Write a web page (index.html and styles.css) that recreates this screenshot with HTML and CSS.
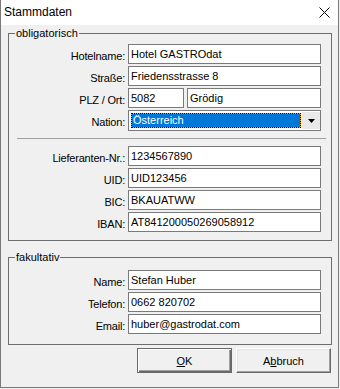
FILE: index.html
```html
<!DOCTYPE html>
<html lang="de">
<head>
    <meta charset="UTF-8">
    <title>Stammdaten</title>
    <link rel="stylesheet" href="styles.css">
</head>
<body>

<div class="window">
    <div class="titlebar">
        <span class="title">Stammdaten</span>
        <svg class="close" width="11" height="11" viewBox="0 0 11 11">
            <path d="M0.5 0.5L10.5 10.5M10.5 0.5L0.5 10.5" stroke="#000" stroke-width="1"/>
        </svg>
    </div>

    <fieldset class="group group-main">
        <legend>obligatorisch</legend>
        <div class="rows">
            <div class="row">
                <label class="lbl">Hotelname:</label>
                <input class="field" type="text" value="Hotel GASTROdat">
            </div>
            <div class="row">
                <label class="lbl">Straße:</label>
                <input class="field" type="text" value="Friedensstrasse 8">
            </div>
            <div class="row">
                <label class="lbl">PLZ / Ort:</label>
                <div class="pair">
                    <input class="field plz" type="text" value="5082">
                    <input class="field ort" type="text" value="Grödig">
                </div>
            </div>
            <div class="row">
                <label class="lbl">Nation:</label>
                <div class="combo">
                    <span class="combo-value">Österreich</span>
                    <span class="combo-btn">
                        <svg width="7" height="4" viewBox="0 0 7 4"><path d="M0 0H7L3.5 4Z" fill="#000"/></svg>
                    </span>
                </div>
            </div>
        </div>

        <div class="sep"></div>

        <div class="rows">
            <div class="row">
                <label class="lbl">Lieferanten-Nr.:</label>
                <input class="field" type="text" value="1234567890">
            </div>
            <div class="row">
                <label class="lbl">UID:</label>
                <input class="field" type="text" value="UID123456">
            </div>
            <div class="row">
                <label class="lbl">BIC:</label>
                <input class="field" type="text" value="BKAUATWW">
            </div>
            <div class="row">
                <label class="lbl">IBAN:</label>
                <input class="field" type="text" value="AT841200050269058912">
            </div>
        </div>
    </fieldset>

    <fieldset class="group group-opt">
        <legend>fakultativ</legend>
        <div class="rows">
            <div class="row">
                <label class="lbl">Name:</label>
                <input class="field" type="text" value="Stefan Huber">
            </div>
            <div class="row">
                <label class="lbl">Telefon:</label>
                <input class="field" type="text" value="0662 820702">
            </div>
            <div class="row">
                <label class="lbl">Email:</label>
                <input class="field" type="text" value="huber@gastrodat.com">
            </div>
        </div>
    </fieldset>

    <div class="buttons">
        <button class="btn btn-default"><u>O</u>K</button>
        <button class="btn">A<u>b</u>bruch</button>
    </div>
</div>

</body>
</html>
```

FILE: styles.css
```css
body {
    margin: 0;
    background: #f0f0f0;
    font-family: "Liberation Sans", Arial, sans-serif;
    font-size: 11px;
    color: #000;
}
.window {
    width: 339px;
    height: 388px;
    box-sizing: border-box;
    border: 1px solid #7a7a7a;
    border-top: 0;
    background: #f0f0f0;
}
.titlebar {
    height: 25px;
    background: #fff;
    display: flex;
    align-items: center;
    justify-content: space-between;
    padding: 0 8px 0 3px;
}
.title {
    font-size: 12px;
    line-height: 25px;
}
.group {
    margin: 2px 0 0 7px;
    width: 324px;
    min-width: 0;
    box-sizing: border-box;
    border: 1px solid #6d6d6d;
    padding: 4px 0 8px 0;
}
.group legend {
    margin-left: 6px;
    padding: 0 1px;
    line-height: 13px;
}
.group-opt {
    margin-top: 10px;
    padding: 6px 0 10px 0;
}
.rows {
    display: flex;
    flex-direction: column;
    gap: 2px;
}
.row {
    display: flex;
    height: 20px;
}
.lbl {
    width: 116px;
    margin-right: 3px;
    text-align: right;
    line-height: 20px;
    padding-top: 2px;
    box-sizing: border-box;
    letter-spacing: -0.2px;
}
.field {
    width: 193px;
    height: 20px;
    box-sizing: border-box;
    margin: 0;
    padding: 0 2px;
    border: 1px solid #7a7a7a;
    background: #fff;
    font: inherit;
    color: #000;
    outline: none;
}
.pair {
    display: flex;
    gap: 3px;
}
.plz {
    width: 56px;
}
.ort {
    width: 134px;
}
.combo {
    width: 193px;
    height: 21px;
    box-sizing: border-box;
    border: 1px solid #7a7a7a;
    background: #fff;
    display: flex;
    gap: 1px;
    padding: 2px 0 2px 2px;
}
.combo-value {
    flex: 1;
    box-sizing: border-box;
    border: 1px dotted #000;
    background: #ff9c1a;
    box-shadow: inset 0 0 0 40px #0078d7;
    color: #fff;
    line-height: 13px;
    padding-left: 1px;
}
.combo-btn {
    width: 18px;
    margin: -1px 0;
    background: #e9e9e9;
    display: flex;
    align-items: center;
    justify-content: center;
}
.sep {
    height: 1px;
    background: #a0a0a0;
    margin: 8px 5px 7px 8px;
}
.buttons {
    display: flex;
    justify-content: flex-end;
    gap: 4px;
    margin-top: 3px;
    padding-right: 7px;
}
.btn {
    width: 95px;
    height: 25px;
    box-sizing: border-box;
    margin: 0;
    padding: 0;
    font: inherit;
    color: #000;
    background: #f0f0f0;
    border: 1px solid;
    border-color: #fff #696969 #696969 #fff;
    box-shadow: inset -1px -1px 0 #a0a0a0, inset 1px 1px 0 #e3e3e3;
}
.btn-default {
    border-color: #696969;
    box-shadow: inset 1px 1px 0 #fff, inset -1px -1px 0 #696969, inset -2px -2px 0 #a0a0a0;
}
```
